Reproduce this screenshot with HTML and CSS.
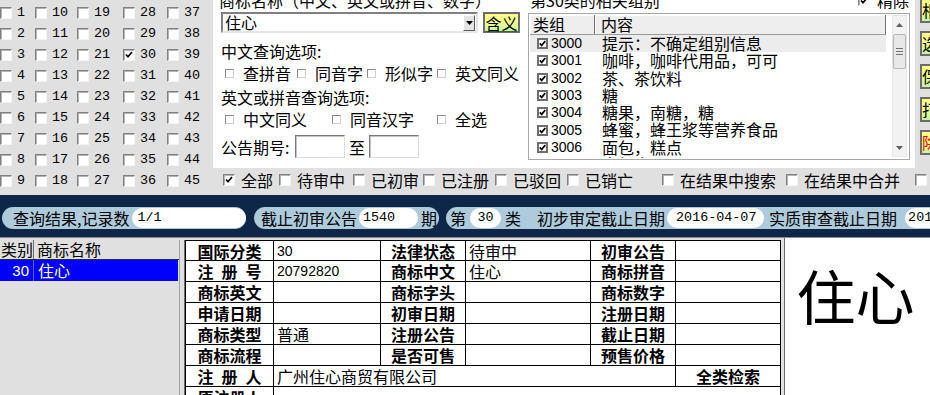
FILE: index.html
```html
<!DOCTYPE html>
<html lang="zh-CN">
<head>
<meta charset="utf-8">
<title>商标查询</title>
<link rel="stylesheet" href="styles.css">
</head>
<body>
<div class="top">
  <div class="numgrid">
    <div class="nc"><span class="cb"></span><span class="num">1</span></div>
    <div class="nc"><span class="cb"></span><span class="num">2</span></div>
    <div class="nc"><span class="cb"></span><span class="num">3</span></div>
    <div class="nc"><span class="cb"></span><span class="num">4</span></div>
    <div class="nc"><span class="cb"></span><span class="num">5</span></div>
    <div class="nc"><span class="cb"></span><span class="num">6</span></div>
    <div class="nc"><span class="cb"></span><span class="num">7</span></div>
    <div class="nc"><span class="cb"></span><span class="num">8</span></div>
    <div class="nc"><span class="cb"></span><span class="num">9</span></div>
    <div class="nc"><span class="cb"></span><span class="num">10</span></div>
    <div class="nc"><span class="cb"></span><span class="num">11</span></div>
    <div class="nc"><span class="cb"></span><span class="num">12</span></div>
    <div class="nc"><span class="cb"></span><span class="num">13</span></div>
    <div class="nc"><span class="cb"></span><span class="num">14</span></div>
    <div class="nc"><span class="cb"></span><span class="num">15</span></div>
    <div class="nc"><span class="cb"></span><span class="num">16</span></div>
    <div class="nc"><span class="cb"></span><span class="num">17</span></div>
    <div class="nc"><span class="cb"></span><span class="num">18</span></div>
    <div class="nc"><span class="cb"></span><span class="num">19</span></div>
    <div class="nc"><span class="cb"></span><span class="num">20</span></div>
    <div class="nc"><span class="cb"></span><span class="num">21</span></div>
    <div class="nc"><span class="cb"></span><span class="num">22</span></div>
    <div class="nc"><span class="cb"></span><span class="num">23</span></div>
    <div class="nc"><span class="cb"></span><span class="num">24</span></div>
    <div class="nc"><span class="cb"></span><span class="num">25</span></div>
    <div class="nc"><span class="cb"></span><span class="num">26</span></div>
    <div class="nc"><span class="cb"></span><span class="num">27</span></div>
    <div class="nc"><span class="cb"></span><span class="num">28</span></div>
    <div class="nc"><span class="cb"></span><span class="num">29</span></div>
    <div class="nc"><span class="cb"><svg width="8" height="7" viewBox="0 0 8 7"><path d="M1 3.5l2 2.2L7 1" fill="none" stroke="#000" stroke-width="1.7"/></svg></span><span class="num">30</span></div>
    <div class="nc"><span class="cb"></span><span class="num">31</span></div>
    <div class="nc"><span class="cb"></span><span class="num">32</span></div>
    <div class="nc"><span class="cb"></span><span class="num">33</span></div>
    <div class="nc"><span class="cb"></span><span class="num">34</span></div>
    <div class="nc"><span class="cb"></span><span class="num">35</span></div>
    <div class="nc"><span class="cb"></span><span class="num">36</span></div>
    <div class="nc"><span class="cb"></span><span class="num">37</span></div>
    <div class="nc"><span class="cb"></span><span class="num">38</span></div>
    <div class="nc"><span class="cb"></span><span class="num">39</span></div>
    <div class="nc"><span class="cb"></span><span class="num">40</span></div>
    <div class="nc"><span class="cb"></span><span class="num">41</span></div>
    <div class="nc"><span class="cb"></span><span class="num">42</span></div>
    <div class="nc"><span class="cb"></span><span class="num">43</span></div>
    <div class="nc"><span class="cb"></span><span class="num">44</span></div>
    <div class="nc"><span class="cb"></span><span class="num">45</span></div>
  </div>

  <div class="panel">
    <div class="opts">
      <div class="cut">商标名称（中文、英文或拼音、数字）</div>
      <div class="comborow">
        <div class="combo"><span>住心</span><span class="ddbtn"><svg width="7" height="4" viewBox="0 0 7 4"><path d="M0 0h7L3.5 4z"/></svg></span></div>
        <div class="ybtn meaning"><span class="ul">含义</span></div>
      </div>
      <div class="olabel">中文查询选项:</div>
      <div class="srow">
        <span class="sitem w72"><i class="sbox"></i>查拼音</span>
        <span class="sitem w70"><i class="sbox"></i>同音字</span>
        <span class="sitem w70"><i class="sbox"></i>形似字</span>
        <span class="sitem"><i class="sbox"></i>英文同义</span>
      </div>
      <div class="olabel gap4">英文或拼音查询选项:</div>
      <div class="srow">
        <span class="sitem w107"><i class="sbox"></i>中文同义</span>
        <span class="sitem w105"><i class="sbox"></i>同音汉字</span>
        <span class="sitem"><i class="sbox"></i>全选</span>
      </div>
      <div class="issue">
        <span class="il">公告期号:</span><span class="tb"></span><span class="to">至</span><span class="tb"></span>
      </div>
    </div>

    <div class="groups">
      <div class="ghead">
        <span class="gtitle">第30类的相关组别</span>
        <span class="cb"><svg width="8" height="7" viewBox="0 0 8 7"><path d="M1 3.5l2 2.2L7 1" fill="none" stroke="#000" stroke-width="1.7"/></svg></span>
        <span class="flabel">精除</span>
      </div>
      <div class="lv">
        <div class="lvmain">
          <div class="lvh"><span class="h1">类组</span><span class="h2">内容</span></div>
          <div class="lr sel"><span class="c1"><i class="lcb"><svg width="7" height="7" viewBox="0 0 7 7"><path d="M0.8 3.4l1.9 2L6.3 1" fill="none" stroke="#000" stroke-width="1.7"/></svg></i><span class="d">3000</span></span><span class="c2">提示：不确定组别信息</span></div>
          <div class="lr"><span class="c1"><i class="lcb"><svg width="7" height="7" viewBox="0 0 7 7"><path d="M0.8 3.4l1.9 2L6.3 1" fill="none" stroke="#000" stroke-width="1.7"/></svg></i><span class="d">3001</span></span><span class="c2">咖啡，咖啡代用品，可可</span></div>
          <div class="lr"><span class="c1"><i class="lcb"><svg width="7" height="7" viewBox="0 0 7 7"><path d="M0.8 3.4l1.9 2L6.3 1" fill="none" stroke="#000" stroke-width="1.7"/></svg></i><span class="d">3002</span></span><span class="c2">茶、茶饮料</span></div>
          <div class="lr"><span class="c1"><i class="lcb"><svg width="7" height="7" viewBox="0 0 7 7"><path d="M0.8 3.4l1.9 2L6.3 1" fill="none" stroke="#000" stroke-width="1.7"/></svg></i><span class="d">3003</span></span><span class="c2">糖</span></div>
          <div class="lr"><span class="c1"><i class="lcb"><svg width="7" height="7" viewBox="0 0 7 7"><path d="M0.8 3.4l1.9 2L6.3 1" fill="none" stroke="#000" stroke-width="1.7"/></svg></i><span class="d">3004</span></span><span class="c2">糖果，南糖，糖</span></div>
          <div class="lr"><span class="c1"><i class="lcb"><svg width="7" height="7" viewBox="0 0 7 7"><path d="M0.8 3.4l1.9 2L6.3 1" fill="none" stroke="#000" stroke-width="1.7"/></svg></i><span class="d">3005</span></span><span class="c2">蜂蜜，蜂王浆等营养食品</span></div>
          <div class="lr"><span class="c1"><i class="lcb"><svg width="7" height="7" viewBox="0 0 7 7"><path d="M0.8 3.4l1.9 2L6.3 1" fill="none" stroke="#000" stroke-width="1.7"/></svg></i><span class="d">3006</span></span><span class="c2">面包，糕点</span></div>
          <div class="lr"><span class="c1"><i class="lcb"><svg width="7" height="7" viewBox="0 0 7 7"><path d="M0.8 3.4l1.9 2L6.3 1" fill="none" stroke="#000" stroke-width="1.7"/></svg></i><span class="d">3007</span></span><span class="c2">方便食品</span></div>
        </div>
        <div class="vs">
          <span class="arr"><svg width="7" height="4" viewBox="0 0 7 4"><path d="M0 4h7L3.5 0z" fill="#606060"/></svg></span>
          <span class="thumb"><i></i><i></i><i></i></span>
          <span class="track"></span>
          <span class="arr"><svg width="7" height="4" viewBox="0 0 7 4"><path d="M0 0h7L3.5 4z" fill="#606060"/></svg></span>
        </div>
      </div>
    </div>
  </div>

  <div class="side">
    <div class="ybtn sb">相</div>
    <div class="ybtn sb">选</div>
    <div class="ybtn sb">保</div>
    <div class="ybtn sb">打</div>
    <div class="ybtn sb red">除</div>
  </div>

  <div class="filters">
    <span class="fi w56"><span class="cb"><svg width="8" height="7" viewBox="0 0 8 7"><path d="M1 3.5l2 2.2L7 1" fill="none" stroke="#000" stroke-width="1.7"/></svg></span>全部</span>
    <span class="fi w74"><span class="cb"></span>待审中</span>
    <span class="fi w70"><span class="cb"></span>已初审</span>
    <span class="fi w72"><span class="cb"></span>已注册</span>
    <span class="fi w72"><span class="cb"></span>已驳回</span>
    <span class="fi w95"><span class="cb"></span>已销亡</span>
    <span class="fi w124"><span class="cb"></span>在结果中搜索</span>
    <span class="fi w129"><span class="cb"></span>在结果中合并</span>
    <span class="fi"><span class="cb"></span></span>
  </div>
</div>

<div class="navbar">
  <div class="pill p1"><span class="pl">查询结果,记录数</span><span class="field grow">1/1</span></div>
  <div class="pill p2"><span class="pl">截止初审公告</span><span class="field f1540">1540</span><span class="pl m3">期</span></div>
  <div class="pill p3">
    <span class="pl">第</span><span class="field f30">30</span><span class="pl m4">类</span>
    <span class="pl m16">初步审定截止日期</span><span class="field fdate">2016-04-07</span>
    <span class="pl m5">实质审查截止日期</span><span class="field fdate2">2016-04-07</span>
  </div>
</div>

<div class="bottom">
  <div class="list">
    <div class="lhead"><span class="lc1">类别</span><span class="lc2">商标名称</span></div>
    <div class="lrow"><span class="lc1">30</span><span class="lc2">住心</span></div>
  </div>
  <div class="split"></div>
  <div class="info">
    <div class="k">国际分类</div><div class="v"><span class="d">30</span></div><div class="k">法律状态</div><div class="v">待审中</div><div class="k">初审公告</div><div class="v"></div>
    <div class="k">注&ensp;册&ensp;号</div><div class="v"><span class="d">20792820</span></div><div class="k">商标中文</div><div class="v">住心</div><div class="k">商标拼音</div><div class="v"></div>
    <div class="k">商标英文</div><div class="v"></div><div class="k">商标字头</div><div class="v"></div><div class="k">商标数字</div><div class="v"></div>
    <div class="k">申请日期</div><div class="v"></div><div class="k">初审日期</div><div class="v"></div><div class="k">注册日期</div><div class="v"></div>
    <div class="k">商标类型</div><div class="v">普通</div><div class="k">注册公告</div><div class="v"></div><div class="k">截止日期</div><div class="v"></div>
    <div class="k">商标流程</div><div class="v"></div><div class="k">是否可售</div><div class="v"></div><div class="k">预售价格</div><div class="v"></div>
    <div class="k">注&ensp;册&ensp;人</div><div class="v span4">广州住心商贸有限公司</div><div class="k">全类检索</div>
    <div class="k">原注册人</div><div class="v span5"></div>
  </div>
  <div class="split2"></div>
  <div class="preview">住心</div>
</div>
</body>
</html>
```

FILE: styles.css
```css
* { box-sizing: border-box; }
html, body { margin: 0; padding: 0; }
body {
  width: 930px;
  height: 395px;
  overflow: hidden;
  background: #e0e0e0;
  color: #000;
  font-family: "Noto Sans CJK SC", "Liberation Sans", sans-serif;
  font-size: 16px;
  line-height: 20px;
}
i { font-style: normal; }

/* ---------- top ---------- */
.top {
  display: grid;
  grid-template-columns: 213px 702px 15px;
  grid-template-rows: 168px 27px;
  height: 195px;
}

.numgrid {
  grid-column: 1;
  grid-row: 1 / 3;
  display: grid;
  grid-auto-flow: column;
  grid-template-rows: repeat(9, 21px);
  grid-template-columns: 35px 42px 46px 44px 46px;
  padding-top: 2px;
}
.nc { display: flex; align-items: center; }
.num {
  font-family: "Liberation Mono", monospace;
  font-size: 13.4px;
  margin-left: 5px;
}

.cb {
  width: 12px;
  height: 12px;
  flex: none;
  display: inline-flex;
  align-items: center;
  justify-content: center;
  background: #fff;
  border: 1px solid;
  border-color: #808080 #f4f4f4 #f4f4f4 #808080;
  box-shadow: inset 1px 1px 0 #b4b4b4;
}

.panel {
  grid-column: 2;
  grid-row: 1;
  background: #fff;
  display: flex;
}

.opts { width: 312px; padding-left: 6px; flex: none; }
.cut {
  height: 16px;
  line-height: 16px;
  margin-top: -8px;
  white-space: nowrap;
}
.comborow { display: flex; margin-top: 4px; margin-left: 2px; height: 21px; }
.combo {
  width: 257px;
  height: 21px;
  border: 2px solid;
  border-color: #808080 #e6e6e6 #e6e6e6 #808080;
  display: flex;
  align-items: center;
  justify-content: space-between;
  padding: 0 1px 0 2px;
  line-height: 17px;
}
.ddbtn {
  width: 12px;
  height: 16px;
  display: flex;
  align-items: center;
  justify-content: center;
  background: #e4e4e4;
  border: 1px solid;
  border-color: #fff #5a5a5a #5a5a5a #fff;
}
.ybtn {
  background: linear-gradient(#ffff86 0%, #f4ff8c 45%, #c6f2a6 100%);
  border: 2px solid #6c6c6c;
}
.meaning {
  width: 37px;
  height: 21px;
  margin-left: 5px;
  display: flex;
  align-items: center;
  justify-content: center;
  line-height: 16px;
}
.ul { text-decoration: underline; text-decoration-color: #3a6a20; text-underline-offset: 1px; }

.olabel { margin-top: 8px; margin-left: 2px; height: 20px; white-space: nowrap; }
.olabel.gap4 { margin-top: 4px; }
.srow { display: flex; align-items: center; height: 20px; margin-top: 2px; padding-left: 6px; white-space: nowrap; }
.sitem { display: flex; align-items: center; flex: none; }
.w72 { width: 72px; }
.w70 { width: 70px; }
.w107 { width: 107px; }
.w105 { width: 105px; }
.sbox {
  width: 9px;
  height: 9px;
  margin-right: 9px;
  background: #fff;
  border: 1px solid;
  border-color: #8a8a8a #cfcfcf #cfcfcf #8a8a8a;
}
.issue { display: flex; align-items: center; height: 23px; margin-top: 6px; margin-left: 2px; }
.il { width: 74px; white-space: nowrap; }
.tb {
  width: 50px;
  height: 23px;
  background: #fff;
  border: 1px solid;
  border-color: #7a7a7a #dcdcdc #dcdcdc #7a7a7a;
  box-shadow: inset 1px 1px 0 #c4c4c4;
}
.to { width: 24px; text-align: center; }

.groups { width: 390px; flex: none; }
.ghead { display: flex; align-items: center; height: 16px; line-height: 16px; margin-top: -8px; padding-left: 5px; }
.gtitle { width: 328px; white-space: nowrap; }
.flabel { margin-left: 7px; }

.lv {
  margin: 5px 0 0 3px;
  width: 382px;
  height: 147px;
  border: 1px solid #a8a8a8;
  padding: 1px;
  display: flex;
  background: #fff;
}
.lvmain { width: 356px; height: 143px; overflow: hidden; flex: none; }
.lvh {
  display: flex;
  height: 20px;
  background: #eeeeee;
  border-bottom: 1px solid #9a9a9a;
  line-height: 19px;
}
.lvh span { box-shadow: inset 1px 1px 0 #fff; border-right: 1px solid #707070; }
.lvh .h1 { width: 65px; padding-left: 3px; }
.lvh .h2 { flex: 1; padding-left: 6px; }
.lr { display: flex; height: 17.3px; line-height: 17px; white-space: nowrap; }
.lr.sel { background: #ececec; }
.lr .c1 { width: 65px; padding-left: 7px; display: flex; align-items: center; flex: none; }
.lr .c2 { padding-left: 7px; }
.lcb {
  width: 11px;
  height: 11px;
  flex: none;
  margin-right: 3px;
  border: 2px solid #6e6e6e;
  background: #fff;
  display: flex;
  align-items: center;
  justify-content: center;
}
.d { font-family: "Liberation Sans", sans-serif; font-size: 14px; }

.vs {
  width: 15px;
  height: 142px;
  margin-left: 6px;
  flex: none;
  background: #f2f2f2;
  border: 1px solid #e6e6e6;
  display: flex;
  flex-direction: column;
  align-items: center;
}
.arr { height: 17px; display: flex; align-items: center; justify-content: center; width: 100%; }
.thumb {
  width: 13px;
  height: 35px;
  margin-top: 1px;
  background: #e8e8e8;
  border: 1px solid #b6b6b6;
  border-radius: 2px;
  display: flex;
  flex-direction: column;
  align-items: center;
  justify-content: center;
  gap: 2px;
}
.thumb i { width: 7px; height: 1px; background: #707070; }
.track { flex: 1; }

.side {
  grid-column: 3;
  grid-row: 1;
  padding-left: 5px;
  margin-top: -2px;
  display: flex;
  flex-direction: column;
  gap: 8px;
}
.sb { width: 40px; height: 25px; line-height: 21px; padding-left: 0; flex: none; }
.sb.red { color: #f00000; }

.filters {
  grid-column: 2 / 4;
  grid-row: 2;
  display: flex;
  align-items: center;
  padding: 0 0 4px 10px;
  white-space: nowrap;
}
.fi { display: flex; align-items: center; flex: none; }
.fi .cb { margin-right: 6px; }
.w56 { width: 56px; }
.w74 { width: 74px; }
.w95 { width: 95px; }
.w124 { width: 124px; }
.w129 { width: 129px; }

/* ---------- nav bar ---------- */
.navbar {
  height: 42px;
  background: #0e2648;
  display: flex;
  padding: 12px 0 0 2px;
  overflow: hidden;
  white-space: nowrap;
}
.pill {
  height: 22px;
  background: #aecbdc;
  border-radius: 11px;
  display: flex;
  align-items: center;
  flex: none;
}
.pl { flex: none; }
.field {
  height: 20px;
  background: #fff;
  border-radius: 10px;
  font-family: "Liberation Mono", monospace;
  font-size: 13.4px;
  line-height: 20px;
  flex: none;
}
.p1 { width: 244px; padding-left: 11px; }
.p1 .field.grow { flex: 1; margin-left: 3px; padding-left: 5px; }
.p2 { margin-left: 8px; padding: 0 2px 0 7px; }
.f1540 { width: 59px; margin-left: 2px; padding-left: 4px; }
.m3 { margin-left: 3px; }
.m4 { margin-left: 4px; }
.m5 { margin-left: 5px; }
.m16 { margin-left: 16px; }
.p3 { margin-left: 7px; padding-left: 4px; width: 600px; }
.f30 { width: 31px; margin-left: 4px; text-align: center; }
.fdate { width: 97px; margin-left: 2px; padding-left: 9px; }
.fdate2 { width: 97px; margin-left: 8px; padding-left: 3px; }

/* ---------- bottom ---------- */
.bottom {
  height: 158px;
  border-top: 1px solid #8a8a8a;
  padding-top: 2px;
  display: flex;
  overflow: hidden;
}
.list { width: 180px; flex: none; border-right: 1px solid #a4a4a4; }
.lhead {
  display: flex;
  height: 20px;
  line-height: 19px;
  border-bottom: 1px solid #2a2a2a;
  width: 179px;
}
.lhead .lc1 { width: 34px; padding-left: 1px; border-right: 1px solid #6a6a6a; }
.lhead .lc2 { padding-left: 3px; }
.lrow {
  display: flex;
  height: 21px;
  line-height: 21px;
  width: 178px;
  background: #0000ff;
  color: #fff;
}
.lrow .lc1 {
  width: 34px;
  text-align: right;
  padding-right: 4px;
  border-right: 1px solid #6060ff;
  font-family: "Liberation Sans", sans-serif;
  font-size: 15px;
}
.lrow .lc2 { padding-left: 4px; }
.split { width: 5px; flex: none; border-right: 1px solid #6e6e6e; }

.info {
  display: grid;
  grid-template-columns: 88px 107px 85px 125px 85px 105px;
  grid-template-rows: 20px repeat(7, 21px);
  width: 596px;
  flex: none;
  align-self: flex-start;
  background: #fff;
  border-left: 1px solid #000;
  border-top: 1px solid #000;
}
.k, .v {
  border-right: 1px solid #000;
  border-bottom: 1px solid #000;
  display: flex;
  align-items: center;
  white-space: nowrap;
  overflow: hidden;
  line-height: 18px;
}
.k { justify-content: center; font-weight: 700; }
.v { padding-left: 3px; }
.span4 { grid-column: span 4; }
.span5 { grid-column: span 5; }

.split2 { width: 4px; flex: none; border-right: 1px solid #6a6a6a; margin-top: -2px; }
.preview {
  flex: 1;
  margin-top: -2px;
  background: #fff;
  font-size: 59px;
  line-height: 58px;
  text-align: center;
  padding: 28px 4px 0 0;
  white-space: nowrap;
}
```
